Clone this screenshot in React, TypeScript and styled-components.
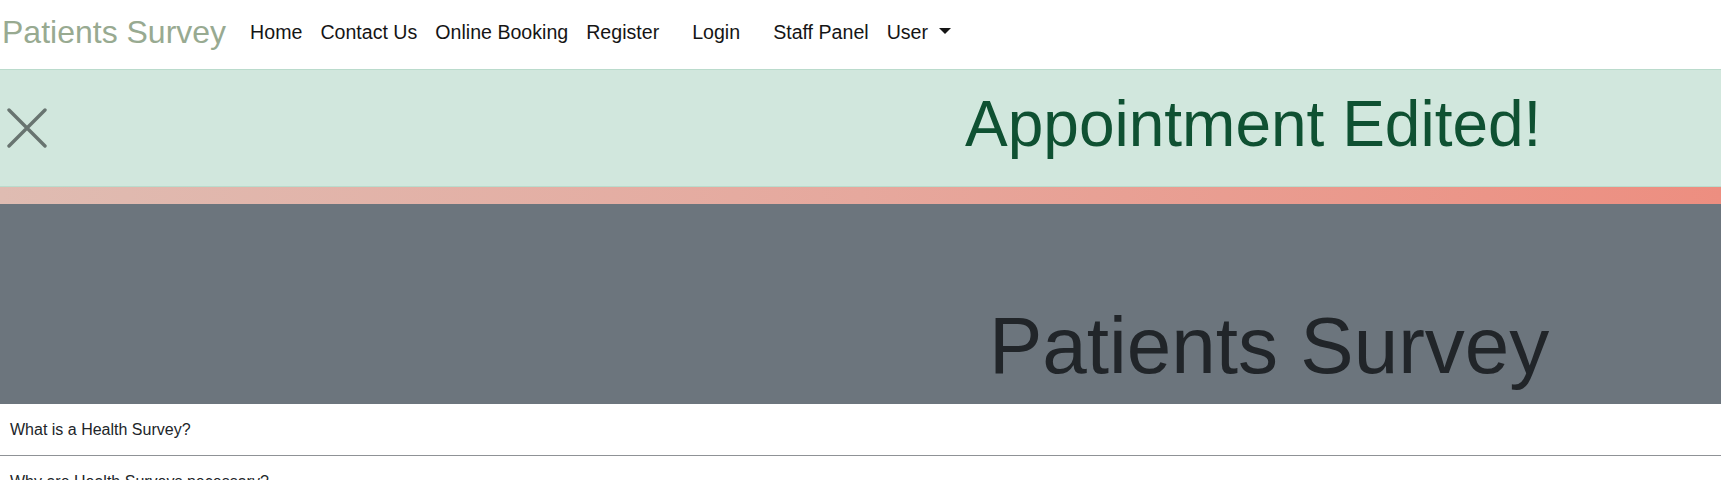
import React from "react";
import styled, { createGlobalStyle } from "styled-components";

const GlobalStyle = createGlobalStyle`
  html, body {
    margin: 0;
    padding: 0;
    background: #ffffff;
    font-family: "Liberation Sans", Arial, sans-serif;
    color: #212529;
  }
  * { box-sizing: border-box; }
`;

const Page = styled.div`
  display: flex;
  flex-direction: column;
  width: 100%;
`;

const Navbar = styled.nav`
  display: flex;
  align-items: center;
  height: 65px;
  margin-bottom: 4px;
  padding: 0 0 0 2px;
`;

const Brand = styled.a`
  font-size: 32px;
  line-height: 1.2;
  color: #98aa91;
  text-decoration: none;
  margin-right: 15px;
  white-space: nowrap;
`;

const NavList = styled.ul`
  display: flex;
  align-items: center;
  list-style: none;
  margin: 0;
  padding: 0;
`;

const NavItem = styled.li<{ $spaced?: boolean }>`
  margin: ${(p) => (p.$spaced ? "0 15px" : "0")};
`;

const NavLink = styled.a`
  display: flex;
  align-items: center;
  padding: 0 9px;
  font-size: 19.6px;
  line-height: 1.5;
  color: #151515;
  text-decoration: none;
  white-space: nowrap;
  cursor: pointer;
`;

const Caret = styled.span`
  display: inline-block;
  margin-left: 11px;
  margin-top: -2px;
  width: 0;
  height: 0;
  border-left: 6px solid transparent;
  border-right: 6px solid transparent;
  border-top: 6px solid #151515;
`;

const Alert = styled.div`
  display: flex;
  align-items: center;
  background: #d1e7dd;
  border-top: 1px solid #badbcc;
  border-bottom: 1px solid #badbcc;
  padding: 16px 0 24px 0;
`;

const CloseButton = styled.button`
  display: flex;
  align-items: center;
  justify-content: center;
  align-self: center;
  margin: 4px 0 -4px 7px;
  padding: 0;
  width: 40px;
  height: 40px;
  border: none;
  background: transparent;
  cursor: pointer;
`;

const AlertHeading = styled.h1`
  margin: 0 0 0 918px;
  font-size: 64px;
  line-height: 76px;
  font-weight: 400;
  color: #0f5132;
  white-space: nowrap;
`;

const GradientBar = styled.div`
  height: 17px;
  background: linear-gradient(90deg, #dfbcb2 0%, #e6a89d 50%, #ed8e80 100%);
`;

const Hero = styled.header`
  display: flex;
  flex-direction: column;
  justify-content: flex-end;
  height: 200px;
  background: #6c757d;
  padding-bottom: 10px;
`;

const HeroTitle = styled.h1`
  margin: 0 0 0 989px;
  font-size: 80px;
  line-height: 96px;
  font-weight: 400;
  color: #212529;
  white-space: nowrap;
`;

const FaqList = styled.section`
  display: flex;
  flex-direction: column;
`;

const FaqRow = styled.div`
  display: flex;
  align-items: center;
  height: 52px;
  padding: 0 10px;
  border-bottom: 1px solid #8f9296;
  font-size: 16px;
  line-height: 1.5;
  color: #212529;
`;

const links = ["Home", "Contact Us", "Online Booking", "Register"];

export default function App() {
  return (
    <>
      <GlobalStyle />
      <Page>
        <Navbar>
          <Brand href="#">Patients Survey</Brand>
          <NavList>
            {links.map((l) => (
              <NavItem key={l}>
                <NavLink>{l}</NavLink>
              </NavItem>
            ))}
            <NavItem $spaced>
              <NavLink>Login</NavLink>
            </NavItem>
            <NavItem>
              <NavLink>Staff Panel</NavLink>
            </NavItem>
            <NavItem>
              <NavLink>
                User
                <Caret />
              </NavLink>
            </NavItem>
          </NavList>
        </Navbar>

        <Alert role="alert">
          <CloseButton aria-label="Close">
            <svg width="40" height="40" viewBox="0 0 40 40">
              <path
                d="M2 2 L38 38 M38 2 L2 38"
                stroke="#687470"
                strokeWidth="3.4"
                strokeLinecap="round"
                fill="none"
              />
            </svg>
          </CloseButton>
          <AlertHeading>Appointment Edited!</AlertHeading>
        </Alert>

        <GradientBar />

        <Hero>
          <HeroTitle>Patients Survey</HeroTitle>
        </Hero>

        <FaqList>
          <FaqRow>What is a Health Survey?</FaqRow>
          <FaqRow>Why are Health Surveys necessary?</FaqRow>
        </FaqList>
      </Page>
    </>
  );
}
